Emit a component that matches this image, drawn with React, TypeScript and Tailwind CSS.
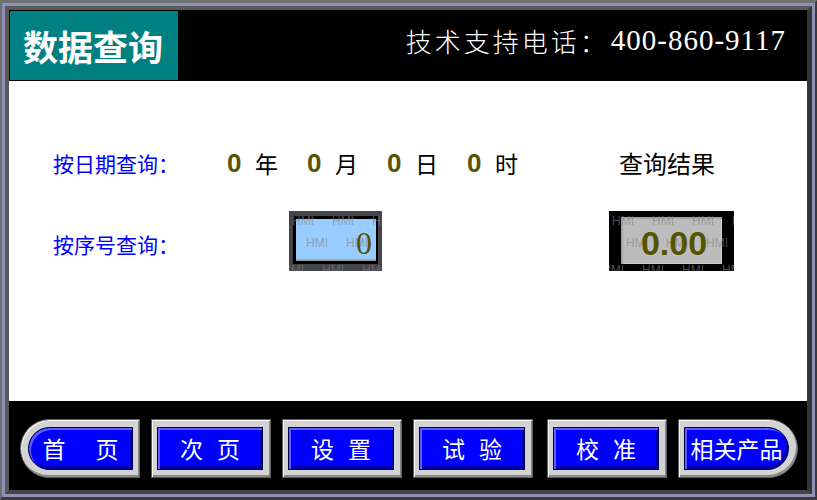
import React from "react";

const CJK = "font-['Noto_Sans_CJK_SC','Noto_Sans',sans-serif]";

// Tiled "HMI" watermark drawn behind the value of a numeric field
function Watermark() {
  const rows = ["left-[3px] top-[4px]", "left-[17px] top-[26px]", "left-[-7px] top-[53px]"];
  return (
    <>
      {rows.map((pos, r) => (
        <div
          key={r}
          className={`pointer-events-none absolute flex whitespace-nowrap font-['Liberation_Sans',Arial,sans-serif] text-[12px] leading-[12px] text-[#808080]/60 ${pos}`}
        >
          {[0, 1, 2, 3, 4].map((i) => (
            <span key={i} className="w-[40px] shrink-0">
              HMI
            </span>
          ))}
        </div>
      ))}
    </>
  );
}

function DateCell({ unit }: { unit: string }) {
  return (
    <div className="flex w-[80px] items-center">
      <span className="w-[14px] font-['Liberation_Sans',Arial,sans-serif] text-[26px] font-bold leading-none text-[#545400]">
        0
      </span>
      <span className={`ml-[14px] text-[23px] leading-none text-black ${CJK}`}>{unit}</span>
    </div>
  );
}

type Shape = "left" | "mid" | "right";

function NavButton({ chars, shape, wide }: { chars: string[]; shape: Shape; wide?: boolean }) {
  const frame =
    shape === "left"
      ? "rounded-l-[30px] pl-[7px] pr-[6px]"
      : shape === "right"
        ? "rounded-r-[30px] pl-[5px] pr-[8px]"
        : "pl-[5px] pr-[7px]";
  const inner =
    shape === "left" ? "rounded-l-[22px]" : shape === "right" ? "rounded-r-[22px]" : "";
  return (
    <div
      className={`flex h-[59px] w-[120px] shrink-0 items-stretch border border-[#5e5e5e] bg-[#d3d3d3] py-[7px] shadow-[inset_1px_1px_0_#f6f6f6,inset_-1px_-2px_0_#8a8a8a] ${frame}`}
    >
      <div
        className={`flex flex-1 items-center justify-center border border-[#00004a] bg-[#0000ff] shadow-[inset_2px_2px_0_#5c5cff,inset_-2px_-3px_0_#0000a6] ${inner}`}
      >
        <div className={`flex items-center text-[23px] leading-none text-white ${wide ? "gap-[30px]" : "gap-[14px]"} ${CJK}`}>
          {chars.map((c, i) => (
            <span key={i}>{c}</span>
          ))}
        </div>
      </div>
    </div>
  );
}

export default function App() {
  return (
    <div className="h-[500px] w-[817px] border-b-[3px] border-l-[2px] border-r-[2px] border-t-[3px] border-b-[#3a3a3a] border-l-[#6e6e6e] border-r-[#3a3a3a] border-t-[#707070] bg-[#8c91b5]">
      <div className="h-full w-full border-[3px] border-[#8c91b5]">
        <div className="flex h-full w-full flex-col border-b-[4px] border-l-[4px] border-r-[5px] border-t-[4px] border-b-[#444444] border-l-[#595959] border-r-[#363636] border-t-[#5a5a5a]">
          {/* Title bar */}
          <div className="flex h-[71px] shrink-0 bg-black">
            <div className="flex w-[170px] items-center border border-black bg-[#008080] pl-[13px]">
              <span className={`text-[35px] font-bold leading-none text-white ${CJK}`}>数据查询</span>
            </div>
            <div className="flex flex-1 items-center justify-end pb-[10px] pr-[21px] text-white">
              <span className={`text-[26px] font-light leading-none tracking-[3px] ${CJK}`}>技术支持电话：</span>
              <span className="ml-[2px] font-['Liberation_Serif','Times_New_Roman',serif] text-[29px] leading-none tracking-[1px]">
                400-860-9117
              </span>
            </div>
          </div>

          {/* Query panel */}
          <div className="flex h-[320px] shrink-0 flex-col bg-white pl-[44px] pt-[67px]">
            <div className="flex h-[30px] items-center">
              <span className={`w-[174px] text-[21px] leading-none text-[#0000ff] ${CJK}`}>按日期查询：</span>
              <DateCell unit="年" />
              <DateCell unit="月" />
              <DateCell unit="日" />
              <DateCell unit="时" />
              <span className={`ml-[72px] text-[24px] leading-none text-black ${CJK}`}>查询结果</span>
            </div>

            <div className="mt-[33px] flex h-[60px] items-center">
              <span className={`mt-[6px] w-[236px] text-[21px] leading-none text-[#0000ff] ${CJK}`}>按序号查询：</span>

              {/* Serial number input */}
              <div className="relative h-[60px] w-[93px] overflow-hidden bg-[#44444c] px-[4px] pb-[7px] pt-[5px]">
                <div className="h-full w-full bg-black p-[3px] pr-[2px]">
                  <div className="flex h-full w-full items-center justify-end border-b-2 border-[#a4a4a4] bg-[#99ccff] pr-[5px]" />
                </div>
                <Watermark />
                <span className="absolute right-[10px] top-[16px] font-['Liberation_Serif','Times_New_Roman',serif] text-[32px] leading-none text-[#545400]">
                  0
                </span>
              </div>

              {/* Result display */}
              <div className="relative ml-[227px] h-[60px] w-[125px] overflow-hidden bg-black px-[12px] pb-[7px] pt-[6px]">
                <div className="h-full w-full bg-[#bcbcbc] shadow-[inset_2px_2px_0_#a4a4a4,inset_-1px_-1px_0_#d0d0d0]" />
                <Watermark />
                <div className="absolute inset-0 flex items-center justify-center pl-[5px] pt-[4px]">
                  <span className="font-['Liberation_Sans',Arial,sans-serif] text-[34px] font-bold leading-none text-[#545400]">
                    0.00
                  </span>
                </div>
              </div>
            </div>
          </div>

          {/* Navigation bar */}
          <div className="flex flex-1 items-start gap-[11px] bg-black pl-[11px] pt-[18px]">
            <NavButton chars={["首", "页"]} shape="left" wide />
            <NavButton chars={["次", "页"]} shape="mid" />
            <NavButton chars={["设", "置"]} shape="mid" />
            <NavButton chars={["试", "验"]} shape="mid" />
            <div className="ml-[3px]">
              <NavButton chars={["校", "准"]} shape="mid" />
            </div>
            <NavButton chars={["相关产品"]} shape="right" />
          </div>
        </div>
      </div>
    </div>
  );
}
